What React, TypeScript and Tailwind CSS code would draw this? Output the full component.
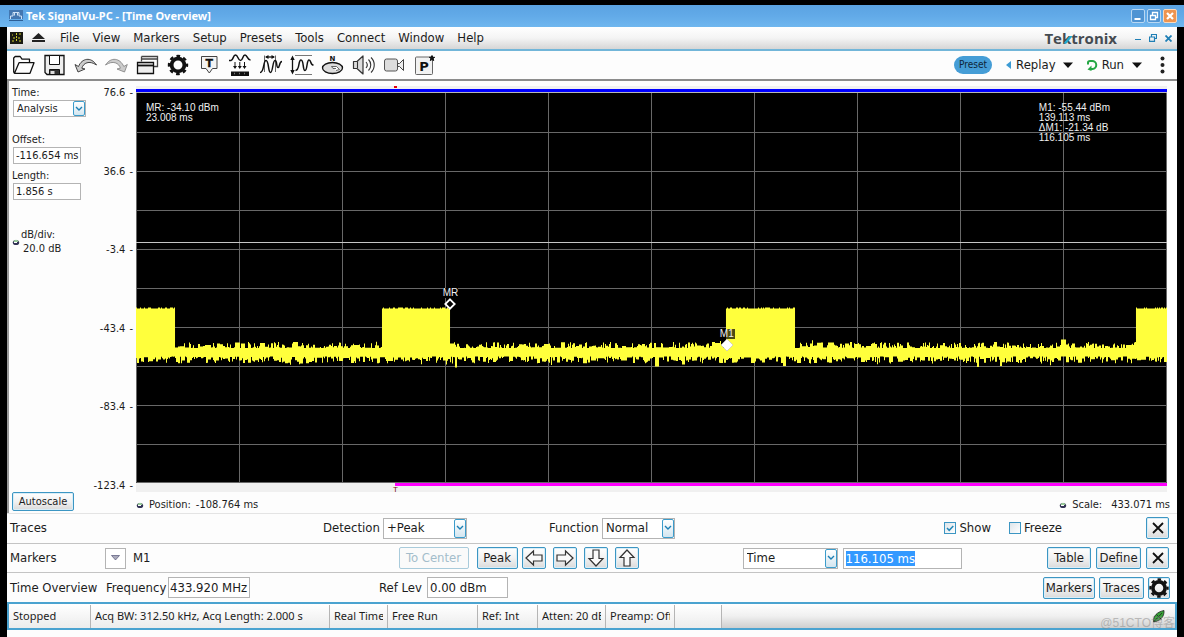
import { useEffect, useRef, type ReactNode } from "react";

const GRID_W = 1031;
const GRID_H = 390;
const BURSTS: [number, number][] = [
  [0, 39],
  [246, 314],
  [590, 659],
  [1000, 1031],
];

function buildTrace(): string {
  let seed = 20177;
  const rnd = () => {
    seed = (seed * 1103515245 + 12345) % 2147483648;
    return seed / 2147483648;
  };
  let d = "";
  let up = 0;
  let down = 0;
  for (let x = 0; x < GRID_W; x++) {
    const burst = BURSTS.some(([a, b]) => x >= a && x < b);
    if (rnd() > 0.35) up = Math.pow(rnd(), 1.8) * 6 + (rnd() > 0.97 ? 3 : 0);
    if (rnd() > 0.35) down = Math.pow(rnd(), 1.4) * 7 + (rnd() > 0.96 ? 4 : 0);
    const top = burst ? 215.5 - (rnd() > 0.7 ? 1 : 0) : 255 - up;
    const bottom = 263.5 + down;
    d += `M${x + 0.5} ${top.toFixed(1)}V${bottom.toFixed(1)}`;
  }
  return d;
}
const TRACE = buildTrace();

function Svg({ children }: { children: ReactNode }) {
  return (
    <svg viewBox="0 0 31 28" className="block h-7 w-[31px]" fill="none" stroke="#111" strokeWidth="1.3" aria-hidden="true">
      {children}
    </svg>
  );
}

function GearShape() {
  return (
    <g fill="none" stroke="#111">
      <circle cx="16" cy="14" r="6.4" strokeWidth="3.8" />
      <circle cx="16" cy="14" r="9" strokeWidth="2.4" strokeDasharray="3.7 3.37" strokeDashoffset="1.85" />
    </g>
  );
}

const tools: { label: string; art: ReactNode }[] = [
  {
    label: "Open",
    art: (
      <Svg>
        <path d="M7.5 22.3 6.7 21V7l1.500-1.500h5L15 8.200h7.500v3.500M7.500 22.300l4.500-10.600h15l-4 10.600Z" strokeLinejoin="round" />
      </Svg>
    ),
  },
  {
    label: "Save",
    art: (
      <Svg>
        <path d="M7 4.500h19v19H9L7 21.500Z" fill="#eee" />
        <path d="M11.500 4.500h10v9h-10Z" fill="#fff" strokeWidth="1" />
        <path d="M11.500 23.500v-5h10v5Z" fill="#333" strokeWidth="1" />
        <path d="M12.500 20h4v3h-4Z" fill="#ddd" stroke="none" />
      </Svg>
    ),
  },
  {
    label: "Undo",
    art: (
      <Svg>
        <path d="M6 13.500 9 21l7-3-3.200-.8C14.500 12 20 9 27.500 14 22 5.500 13 7 9.500 15.500Z" fill="#ccc" stroke="#333" strokeWidth=".9" strokeLinejoin="round" />
      </Svg>
    ),
  },
  {
    label: "Redo",
    art: (
      <Svg>
        <path d="M27.300 13.500 24.500 21l-7.500-3 3.400-.8C19 12 13 9 5.500 14 11 5.500 20 7 23.800 15.500Z" fill="#ccc" stroke="#888" strokeWidth=".9" strokeLinejoin="round" />
      </Svg>
    ),
  },
  {
    label: "Windows",
    art: (
      <Svg>
        <path d="M10.500 5.500h16v10h-4M10.500 8h16M10.500 5.500v5" stroke="#444" />
        <path d="M6.500 11.500h16v11h-16Z" fill="#eee" />
        <path d="M6.500 14.500h16" strokeWidth="1.800" />
      </Svg>
    ),
  },
  {
    label: "Settings",
    art: (
      <Svg>
        <GearShape />
      </Svg>
    ),
  },
  {
    label: "Trigger",
    art: (
      <Svg>
        <path d="M8.500 5.500h15.500v12h-4.500L16.300 22l-3.300-4.500H8.500Z" strokeWidth="1" stroke="#444" fill="#f4f4f4" />
        <text x="16.300" y="16" textAnchor="middle" fontFamily="DejaVu Sans" fontWeight="700" fontSize="11" fill="#111" strokeWidth=".3">T</text>
      </Svg>
    ),
  },
  {
    label: "Acquire",
    art: (
      <Svg>
        <path d="M5 9.500h2C9.500 9 9 4 11.500 4s2.500 5.500 5 5.500S18.500 4 21 4s2 5 5.500 5" strokeWidth="1.500" />
        <path d="M11 11v5M15.800 11v5M20.500 11v5" strokeWidth="1" />
        <path d="M9 15h4l-2 3ZM13.800 15h4l-2 3ZM18.500 15h4l-2 3Z" fill="#111" stroke="none" />
        <path d="M7 20.500h18v4.500H7Z" fill="#111" stroke="none" />
        <path d="M10 22.500h13" stroke="#777" strokeDasharray="1 4" />
      </Svg>
    ),
  },
  {
    label: "Time range",
    art: (
      <Svg>
        <path d="M9.500 4.500V21M20.500 4.500V21" stroke="#666" strokeWidth="1" />
        <path d="M11 6h8" />
        <path d="M10 6l3.500-2v4ZM20 6l-3.500-2v4Z" fill="#111" stroke="none" />
        <path d="M5 21.500c4.500 0 3-12 6-12s2 12 4.500 12 2-12 4.500-12 1 7 3 7 1-6 4-6" strokeWidth="1.500" />
      </Svg>
    ),
  },
  {
    label: "Amplitude range",
    art: (
      <Svg>
        <path d="M9 4.500h17M9 23.500h17" stroke="#777" strokeWidth="1" />
        <path d="M6.500 7v14" />
        <path d="M6.500 4.500 4.300 9h4.400ZM6.500 23.500 4.300 19h4.400Z" fill="#111" stroke="none" />
        <path d="M9.500 19.500c4.500 0 2.500-10.500 5.500-10.500s1.500 10.500 4 10.500 1.500-10.500 4-10.500 1 5 4.500 5" strokeWidth="1.500" />
      </Svg>
    ),
  },
  {
    label: "Navigate",
    art: (
      <Svg>
        <text x="15.500" y="10" textAnchor="middle" fontFamily="DejaVu Sans" fontWeight="700" fontSize="7" fill="#111" stroke="none">N</text>
        <ellipse cx="15.500" cy="17" rx="10" ry="5.500" fill="#ddd" />
        <path d="M14.500 15.500h5l3 3-3.500 1M14.500 15.500l1.500 2h3" strokeWidth=".8" stroke="#444" fill="#fff" />
      </Svg>
    ),
  },
  {
    label: "Audio",
    art: (
      <Svg>
        <path d="M5.500 10.500h3.500l6-5.500v18l-6-5.500H5.500Z" fill="#ddd" stroke="#333" strokeWidth="1.200" strokeLinejoin="round" />
        <path d="M9.500 10.500V17M18 11c1.500 1.700 1.500 4.300 0 6M20.500 8.500c3 3 3 8 0 11M23 6.500c4.300 4 4.300 11 0 15" stroke="#333" strokeWidth="1.100" />
      </Svg>
    ),
  },
  {
    label: "Record",
    art: (
      <Svg>
        <rect x="5.500" y="8" width="13" height="12" rx="2" fill="#ddd" stroke="#555" strokeWidth="1" />
        <path d="M18.500 12.500h2l4-4v11l-4-4h-2Z" fill="#eee" stroke="#444" strokeWidth="1" />
      </Svg>
    ),
  },
  {
    label: "Presets",
    art: (
      <Svg>
        <rect x="5.500" y="6" width="17" height="17.500" rx="1" fill="#f2f2f2" stroke="#666" strokeWidth="1" />
        <text x="14" y="20" textAnchor="middle" fontFamily="DejaVu Sans" fontWeight="700" fontSize="13" fill="#111" stroke="none">P</text>
        <path d="m22 4.500.8 1.800h1.900l-1.500 1.300.5 2L22 8.500l-1.700 1.100.5-2-1.500-1.300h1.900Z" fill="#111" stroke="#111" strokeWidth="1" />
      </Svg>
    ),
  },
];

function DropArrow() {
  return (
    <span className="pointer-events-none absolute inset-y-px right-px flex w-3 items-center justify-center rounded-[2px] border border-[#3c9ccb] bg-linear-to-b from-white to-[#d3e6f0]">
      <svg viewBox="0 0 8 6" className="h-[6px] w-[8px]" fill="none" stroke="#1d7fb4" strokeWidth="1.400" aria-hidden="true">
        <path d="M1 1l3 3 3-3" />
      </svg>
    </span>
  );
}

function Drop({ label, value, className }: { label: string; value: string; className: string }) {
  return (
    <span className={`relative block ${className}`}>
      <select
        aria-label={label}
        defaultValue={value}
        className="block h-full w-full appearance-none border border-[#b4b4b4] bg-white pl-[3px] outline-none"
      >
        <option>{value}</option>
      </select>
      <DropArrow />
    </span>
  );
}

const btn =
  "flex items-center justify-center rounded-[2px] border border-[#3c96c3] bg-linear-to-b from-white via-[#f2f2f2] to-[#dadada] shadow-[inset_0_0_0_1px_#d9edf7]";
const field = "border border-[#b4b4b4] bg-white pl-[2px]";

function ArrowBtn({ label, turn }: { label: string; turn: string }) {
  return (
    <button aria-label={label} className={`${btn} h-[22px] w-6`}>
      <svg viewBox="0 0 20 20" className={`size-5 ${turn}`} fill="#fafafa" stroke="#333" strokeWidth="1.200" aria-hidden="true">
        <path d="M2 10l7.500-7v4H18v6H9.500v4Z" />
      </svg>
    </button>
  );
}

function CloseBtn({ label }: { label: string }) {
  return (
    <button aria-label={label} className={`${btn} h-[22px] w-[23px]`}>
      <svg viewBox="0 0 12 12" className="size-3" stroke="#111" strokeWidth="1.800" aria-hidden="true">
        <path d="M1 1l10 10M11 1L1 11" />
      </svg>
    </button>
  );
}

function Knob() {
  return (
    <svg viewBox="0 0 8 8" className="size-2" aria-hidden="true">
      <ellipse cx="4" cy="4.500" rx="3.200" ry="2.600" fill="#335" />
      <path d="M1.500 4c1-3 4-3 5 0Z" fill="#9c9" />
      <path d="M2 4.500h3" stroke="#fff" strokeWidth="1" />
    </svg>
  );
}

function Check({ label, checked }: { label: string; checked: boolean }) {
  return (
    <label className="flex items-center gap-[3px]">
      <span className="relative block size-3">
        <input
          type="checkbox"
          defaultChecked={checked}
          className="peer block size-3 appearance-none border border-[#3c96c3] bg-linear-to-br from-[#dde5ea] to-white"
        />
        <svg viewBox="0 0 12 12" className="pointer-events-none absolute inset-0 hidden size-3 peer-checked:block" fill="none" stroke="#2387b8" strokeWidth="1.500" aria-hidden="true">
          <path d="M3 6l2.200 2.300L9.300 4" />
        </svg>
      </span>
      {label}
    </label>
  );
}

function Caret() {
  return (
    <svg viewBox="0 0 10 6" className="h-[6px] w-[10px]" fill="#111" aria-hidden="true">
      <path d="M0 0.500h10L5 6Z" />
    </svg>
  );
}

const winBtn = "flex size-[14px] items-center justify-center rounded-[2px] border";

export default function App() {
  const active = useRef<HTMLInputElement>(null);
  useEffect(() => {
    active.current?.focus();
    active.current?.select();
  }, []);

  return (
    <div className="flex min-h-screen w-full flex-col bg-black pt-[5px] font-['DejaVu_Sans_Condensed','DejaVu_Sans',sans-serif] text-[13px] leading-4 text-[#1c1c1c]">
      <header className="flex h-[22px] items-center bg-linear-to-b from-[#5ba3e2] via-[#62aae8] to-[#6fb7ef] pr-[7px] pl-[9px]">
        <svg viewBox="0 0 14 12" className="h-3 w-[14px]" fill="none" aria-hidden="true">
          <path d="M0 0h14v9H0Z" fill="#4377b0" />
          <path d="M1.500 9V6h2.500V2.500h6V6h2.500v3M5.500 2.500v3M8.500 2.500v3" stroke="#cfe2f5" />
          <path d="M0 10.500h14" stroke="#2d5f96" />
        </svg>
        <h1 className="ml-[3px] flex-1 font-['Noto_Sans',sans-serif] text-[11px] font-bold text-white">Tek SignalVu-PC - [Time Overview]</h1>
        <div className="flex gap-[2px]">
          <button aria-label="Minimize" className={`${winBtn} border-[#b9d8f3] bg-[#4f94d3]`}>
            <svg viewBox="0 0 12 12" className="size-3" stroke="#fff" strokeWidth="2" aria-hidden="true">
              <path d="M2.500 9h6" />
            </svg>
          </button>
          <button aria-label="Restore" className={`${winBtn} border-[#b9d8f3] bg-[#4f94d3]`}>
            <svg viewBox="0 0 12 12" className="size-3" fill="none" stroke="#fff" strokeWidth="1.300" aria-hidden="true">
              <path d="M4.500 5V2.500h5v5H7.500M2.500 5.500h5v4h-5Z" />
            </svg>
          </button>
          <button aria-label="Close" className={`${winBtn} border-[#f9d9bc] bg-[#ee9450]`}>
            <svg viewBox="0 0 12 12" className="size-3" stroke="#fff" strokeWidth="2.200" aria-hidden="true">
              <path d="M3 3l6 6M9 3L3 9" />
            </svg>
          </button>
        </div>
      </header>

      <div className="mx-[7px] flex flex-1 flex-col bg-[#fdfdfd]">
        <nav className="flex h-6 items-center border-b-2 border-[#72b6d9] bg-linear-to-b from-white via-[#f4f4f4] to-[#d6d6d6] pr-[5px] pl-[3px]">
          <svg viewBox="0 0 13 12" className="h-3 w-[13px]" aria-hidden="true">
            <path d="M0 0h13v12H0Z" fill="#1a1a12" />
            <path d="M2 3h1M9 2h2M3 6h3M8 6h3M2 9h2M9 9h2M6.500 1v9" stroke="#cfcf2e" strokeDasharray="2 1" />
          </svg>
          <svg viewBox="0 0 13 10" className="ml-[9px] h-[10px] w-[13px]" fill="#222" aria-hidden="true">
            <path d="M6.500 0 13 6H0ZM0 7h13v2H0Z" />
          </svg>
          <ul className="ml-[15px] flex flex-1 gap-[13px]">
            {["File", "View", "Markers", "Setup", "Presets", "Tools", "Connect", "Window", "Help"].map((m) => (
              <li key={m}>
                <button>{m}</button>
              </li>
            ))}
          </ul>
          <div className="flex font-['Open_Sans',sans-serif] text-[15px] leading-5 font-bold text-[#454b51]">
            <span>Te</span>
            <span className="relative">
              k
              <svg viewBox="0 0 10 12" className="absolute top-[4px] left-0 h-3 w-[10px]" aria-hidden="true">
                <path d="M1.500 11.500 7.500 4h3L4.500 11.500Z" fill="#1fa9cf" />
              </svg>
            </span>
            <span>tronix</span>
          </div>
          <div className="ml-[18px] flex items-center gap-2 text-[#1f7fb5]">
            <button aria-label="Minimize document">
              <svg viewBox="0 0 6 8" className="h-2 w-[6px]" stroke="currentColor" aria-hidden="true">
                <path d="M0 5.500h6" />
              </svg>
            </button>
            <button aria-label="Restore document">
              <svg viewBox="0 0 8 8" className="size-2" fill="none" stroke="currentColor" strokeWidth="1.200" aria-hidden="true">
                <path d="M2.500 2.500v-2h5v4H6M.500 3h5v4.400h-5Z" />
              </svg>
            </button>
            <button aria-label="Close document">
              <svg viewBox="0 0 7 7" className="size-[7px]" stroke="currentColor" strokeWidth="1.800" aria-hidden="true">
                <path d="M.500.500l6 6M6.500.500l-6 6" />
              </svg>
            </button>
          </div>
        </nav>

        <div className="flex h-[30px] items-start border-b-2 border-[#8c8c8c] bg-[#fdfdfd] pr-3">
          <div className="flex flex-1">
            {tools.map((t) => (
              <button key={t.label} aria-label={t.label}>
                {t.art}
              </button>
            ))}
          </div>
          <div className="flex h-7 items-center">
            <button className="h-[18px] rounded-full bg-[#459dd6] px-[5px] text-[10px] text-[#0f2638]">Preset</button>
            <button className="ml-[14px] flex items-center gap-[5px]">
              <svg viewBox="0 0 5 8" className="h-2 w-[5px]" fill="#3c9bd4" aria-hidden="true">
                <path d="M5 0v8L0 4Z" />
              </svg>
              Replay
            </button>
            <button aria-label="Replay options" className="ml-[7px]">
              <Caret />
            </button>
            <button className="ml-[13px] flex items-center gap-1">
              <svg viewBox="0 0 12 12" className="size-3" fill="none" stroke="#25a744" strokeWidth="2" aria-hidden="true">
                <path d="M2 5.500V3.500Q2 2 4 2H6A4 4 0 0 1 6.500 10H4" />
                <path d="M5.500 6.500v5.500L1.500 10.500Z" fill="#25a744" stroke="none" />
              </svg>
              Run
            </button>
            <button aria-label="Run options" className="ml-2">
              <Caret />
            </button>
            <button aria-label="More" className="ml-[18px]">
              <svg viewBox="0 0 5 18" className="h-[18px] w-[5px]" fill="#222" aria-hidden="true">
                <circle cx="2.500" cy="2.500" r="2" />
                <circle cx="2.500" cy="9" r="2" />
                <circle cx="2.500" cy="15.500" r="2" />
              </svg>
            </button>
          </div>
        </div>

        <main className="flex h-[432px] border-l-2 border-[#9a9a9a] text-[11px] leading-[14px]">
          <section className="flex w-[82px] shrink-0 flex-col items-start pt-[5px] pb-[2px] pl-[3px]">
            <span>Time:</span>
            <Drop label="Time" value="Analysis" className="ml-px h-[17px] w-[73px]" />
            <label htmlFor="offset" className="mt-4">
              Offset:
            </label>
            <input id="offset" defaultValue="-116.654 ms" className={`${field} ml-px h-[17px] w-[68px]`} />
            <label htmlFor="length" className="mt-[5px]">
              Length:
            </label>
            <input id="length" defaultValue="1.856 s" className={`${field} ml-px h-[17px] w-[68px]`} />
            <div className="mt-7 flex items-center gap-px">
              <Knob />
              <span>
                dB/div:
                <br />
                <span className="pl-[2px]">20.0 dB</span>
              </span>
            </div>
            <button className={`${btn} mt-auto h-[19px] w-[62px]`}>Autoscale</button>
          </section>

          <ol className="flex h-[412px] w-[45px] shrink-0 flex-col justify-between pt-[5px] pr-[3px] text-right whitespace-nowrap">
            {["76.6", "36.6", "-3.4", "-43.4", "-83.4", "-123.4"].map((v) => (
              <li key={v} className="flex justify-end gap-1">
                <span>{v}</span>
                <span>-</span>
              </li>
            ))}
          </ol>

          <section className="mt-[5px] mr-[10px] flex min-w-0 flex-1 flex-col">
            <div className="relative flex h-[7px] flex-col justify-end bg-[#f0f0f0]">
              <span className="absolute top-0 left-[25%] h-[2px] w-[3px] bg-red-600" />
              <div className="h-[3px] bg-[#0000ff]" />
              <div className="h-px bg-[#b8b8b8]" />
            </div>
            <div className="relative font-['Liberation_Sans',sans-serif] text-[10px] leading-[10px] text-[#f0f0f0]">
              <svg viewBox={`0 0 ${GRID_W} ${GRID_H}`} preserveAspectRatio="none" className="block h-[390px] w-full bg-black" aria-label="Amplitude versus time">
                <g stroke="#686868" strokeWidth="1">
                  {Array.from({ length: 9 }, (_, i) => (
                    <path key={`v${i}`} d={`M${103 * (i + 1) + 0.5} 0V${GRID_H}`} />
                  ))}
                  {Array.from({ length: 9 }, (_, i) => (
                    <path key={`h${i}`} d={`M0 ${39 * (i + 1) + 0.5}H${GRID_W}`} />
                  ))}
                  <path d={`M.500 0V${GRID_H - 0.5}H${GRID_W - 0.5}V0`} fill="none" />
                </g>
                <path d={`M0 149.500H${GRID_W}`} stroke="#c4c4c4" />
                <path d={TRACE} stroke="#ffff3c" strokeWidth="1.050" />
              </svg>
              <p className="absolute top-[10px] left-[10px]">
                MR: -34.10 dBm
                <br />
                23.008 ms
              </p>
              <p className="absolute top-[10px] right-[57px]">
                M1: -55.44 dBm
                <br />
                139.113 ms
                <br />
                ΔM1: -21.34 dB
                <br />
                116.105 ms
              </p>
              <div className="absolute top-[195px] left-[30.500%] flex w-4 -translate-x-1/2 flex-col items-center">
                <span className="bg-black">MR</span>
                <svg viewBox="0 0 12 12" className="size-3" fill="#000" stroke="#fff" strokeWidth="1.800" aria-hidden="true">
                  <path d="M6 1.300 10.700 6 6 10.700 1.300 6Z" />
                </svg>
              </div>
              <div className="absolute top-[236px] left-[57.300%] flex w-4 -translate-x-1/2 flex-col items-center">
                <span className="bg-black/70 px-px">M1</span>
                <svg viewBox="0 0 12 12" className="size-3" fill="#fff" stroke="#bbb" strokeWidth=".6" aria-hidden="true">
                  <path d="M6 0l6 6-6 6-6-6Z" />
                </svg>
              </div>
            </div>
            <div className="flex h-[9px] items-start bg-[#f0f0f0]">
              <span className="relative w-[25.100%]">
                <span className="absolute top-0 -right-[3px] font-['Liberation_Sans',sans-serif] text-[8px] text-[#7a1010]">T</span>
              </span>
              <div className="h-[3px] flex-1 bg-[#ff00ff]" />
            </div>
            <div className="mt-[6px] flex items-center justify-between">
              <span className="flex items-center gap-[5px]">
                <Knob />
                <span>Position:</span>
                <span>-108.764 ms</span>
              </span>
              <span className="-mr-[3px] flex items-center gap-[5px]">
                <Knob />
                <span>Scale:</span>
                <span className="ml-1">433.071 ms</span>
              </span>
            </div>
          </section>
        </main>

        <section className="flex h-[31px] items-center border-y border-t-[#e4e4e4] border-b-[#c4c4c4] pr-2 pb-px pl-[3px]">
          <h2 className="w-[313px]">Traces</h2>
          <span className="w-[60px]">Detection</span>
          <Drop label="Detection" value="+Peak" className="h-[21px] w-[84px]" />
          <span className="ml-[82px] w-[53px]">Function</span>
          <Drop label="Function" value="Normal" className="h-[21px] w-[73px]" />
          <div className="mr-[84px] ml-auto flex gap-[18px]">
            <Check label="Show" checked />
            <Check label="Freeze" checked={false} />
          </div>
          <CloseBtn label="Close traces" />
        </section>

        <section className="flex h-[29px] items-center border-b border-[#c4c4c4] pr-2 pl-[3px]">
          <h2 className="w-[95px]">Markers</h2>
          <button aria-label="Select marker" className="flex h-[21px] w-[21px] items-center justify-center border border-[#b4b4b4] bg-white">
            <svg viewBox="0 0 9 6" className="h-[6px] w-[9px]" fill="#aab" stroke="#557" strokeWidth=".7" aria-hidden="true">
              <path d="M.500.500h8L4.500 5Z" />
            </svg>
          </button>
          <span className="ml-[7px]">M1</span>
          <div className="ml-[248px] flex gap-[7px]">
            <button disabled className="mr-px h-[22px] w-[70px] rounded-[2px] border border-[#a9cbdb] bg-[#fafafa] text-[#a3bdcb]">
              To Center
            </button>
            <button className={`${btn} h-[22px] w-[41px]`}>Peak</button>
          </div>
          <div className="ml-1 flex gap-[7px]">
            <ArrowBtn label="Peak left" turn="rotate-0" />
            <ArrowBtn label="Peak right" turn="rotate-180" />
            <ArrowBtn label="Peak down" turn="-rotate-90" />
            <ArrowBtn label="Peak up" turn="rotate-90" />
          </div>
          <div className="mr-auto ml-[104px] flex gap-[5px]">
            <Drop label="Marker axis" value="Time" className="h-[21px] w-[95px]" />
            <input
              ref={active}
              aria-label="Marker time"
              defaultValue="116.105 ms"
              className={`${field} h-[21px] w-[119px] outline-none selection:bg-[#3399ff] selection:text-white`}
            />
          </div>
          <div className="flex gap-[5px]">
            <button className={`${btn} h-[22px] w-[44px]`}>Table</button>
            <button className={`${btn} h-[22px] w-[45px]`}>Define</button>
            <CloseBtn label="Close markers" />
          </div>
        </section>

        <section className="flex h-[29px] items-center pr-[7px] pl-[3px]">
          <h2 className="w-[96px] whitespace-nowrap">Time Overview</h2>
          <label htmlFor="freq" className="w-[62px]">
            Frequency
          </label>
          <input id="freq" defaultValue="433.920 MHz" className="h-[21px] w-[82px] border border-[#b4b4b4] bg-white pl-px" />
          <label htmlFor="ref" className="ml-[129px] w-[48px] whitespace-nowrap">
            Ref Lev
          </label>
          <input id="ref" defaultValue="0.00 dBm" className={`${field} h-[21px] w-[81px]`} />
          <div className="ml-auto flex gap-1">
            <button className={`${btn} h-[22px] w-[52px]`}>Markers</button>
            <button className={`${btn} h-[22px] w-[45px]`}>Traces</button>
            <button aria-label="Settings" className={`${btn} h-[22px] w-[22px]`}>
              <svg viewBox="5.500 3.500 21 21" className="size-5" aria-hidden="true">
                <GearShape />
              </svg>
            </button>
          </div>
        </section>

        <footer className="flex h-7 items-center border-2 border-[#4ba3d0] bg-linear-to-b from-white via-[#f0f0f0] to-[#cfcfcf] font-['Noto_Sans',sans-serif] text-[11px]">
          {(
            [
              ["Stopped", "w-[82px]"],
              ["Acq BW: 312.50 kHz, Acq Length: 2.000 s", "w-[239px]"],
              ["Real Time", "w-[58px]"],
              ["Free Run", "w-[90px]"],
              ["Ref: Int", "w-[60px]"],
              ["Atten: 20 dB", "w-[68px]"],
              ["Preamp: Off", "w-[69px]"],
              ["", "w-[47px]"],
            ] as [string, string][]
          ).map(([t, w]) => (
            <div key={t} className={`h-[23px] shrink-0 border-r border-[#b5b5b5] bg-linear-to-b from-white to-[#ececec] px-1 leading-[21px] ${w}`}>
              <span className="block overflow-hidden whitespace-nowrap">{t}</span>
            </div>
          ))}
          <div className="relative ml-auto flex h-6 w-20 justify-end pr-[9px]">
            <svg viewBox="0 0 14 14" className="mt-[5px] size-[14px]" fill="#36a336" stroke="#222" strokeWidth=".8" aria-hidden="true">
              <path d="M1.500 13C1 7 5 3 12 1.500 12.500 8 8 12 1.500 13ZM1.500 13 10 4M4.500 5.500l5 5" />
            </svg>
            <span className="absolute top-3 right-0 font-['Liberation_Sans','Noto_Sans_CJK_SC',sans-serif] text-[12px] leading-[14px] whitespace-nowrap text-[#8888887f]">@51CTO博客</span>
          </div>
        </footer>
        <div className="h-2" />
      </div>
    </div>
  );
}
